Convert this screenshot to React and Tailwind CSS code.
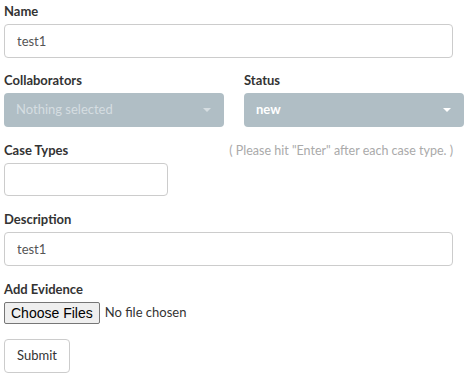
import { useState } from "react";

function Caret({ className }) {
  return (
    <svg width="8" height="4" viewBox="0 0 8 4" className={className}>
      <path d="M0 0 L8 0 L4 4 Z" fill="currentColor" />
    </svg>
  );
}

function Label({ children }) {
  return (
    <label className="block text-[13px] leading-[20px] font-bold text-[#333] mb-[3px]">
      {children}
    </label>
  );
}

export default function App() {
  const [name, setName] = useState("test1");
  const [caseType, setCaseType] = useState("");
  const [description, setDescription] = useState("test1");

  return (
    <div
      className="w-[472px] h-[376px] bg-white pl-[4px] pt-[1px]"
      style={{ fontFamily: "Lato, 'Open Sans', sans-serif" }}
    >
      <div className="mb-[12px]">
        <Label>Name</Label>
        <input
          value={name}
          onChange={(e) => setName(e.target.value)}
          className="block w-[449px] h-[34px] px-[12px] border border-[#ccc] rounded-[4px] text-[13px] text-[#555] outline-none"
        />
      </div>

      <div className="flex gap-[20px] mb-[13px]">
        <div className="w-[220px]">
          <Label>Collaborators</Label>
          <button className="flex items-center justify-between w-[220px] h-[34px] px-[12px] rounded-[4px] bg-[#b0bec5] text-[13px] text-[#d5dde1]">
            <span>Nothing selected</span>
            <Caret className="text-[#d5dde1] mr-[1px]" />
          </button>
        </div>
        <div className="w-[220px]">
          <Label>Status</Label>
          <button className="flex items-center justify-between w-[220px] h-[34px] px-[12px] rounded-[4px] bg-[#b0bec5] text-[13px] font-bold text-white">
            <span>new</span>
            <Caret className="text-white mr-[1px]" />
          </button>
        </div>
      </div>

      <div className="mb-[13px]">
        <div className="flex justify-between items-start w-[449px]">
          <Label>Case Types</Label>
          <span className="text-[12.5px] leading-[20px] text-[#aaa] pt-[1px]">
            ( Please hit "Enter" after each case type. )
          </span>
        </div>
        <input
          value={caseType}
          onChange={(e) => setCaseType(e.target.value)}
          className="block w-[164px] h-[33px] px-[12px] border border-[#ccc] rounded-[4px] text-[13px] text-[#555] outline-none"
        />
      </div>

      <div className="mb-[13px]">
        <Label>Description</Label>
        <input
          value={description}
          onChange={(e) => setDescription(e.target.value)}
          className="block w-[449px] h-[34px] px-[12px] border border-[#ccc] rounded-[4px] text-[13px] text-[#555] outline-none"
        />
      </div>

      <div className="mb-[15px]">
        <Label>Add Evidence</Label>
        <div className="flex items-center gap-[5px]">
          <button
            className="h-[22px] px-[6px] border border-[#767676] rounded-[2px] bg-[#efefef] text-[14px] leading-[20px] text-black"
            style={{ fontFamily: "'Liberation Sans', Arial, sans-serif" }}
          >
            Choose Files
          </button>
          <span className="text-[13px] text-[#333]">No file chosen</span>
        </div>
      </div>

      <button className="h-[34px] px-[12px] border border-[#ccc] rounded-[4px] bg-white text-[13px] text-[#333]">
        Submit
      </button>
    </div>
  );
}
